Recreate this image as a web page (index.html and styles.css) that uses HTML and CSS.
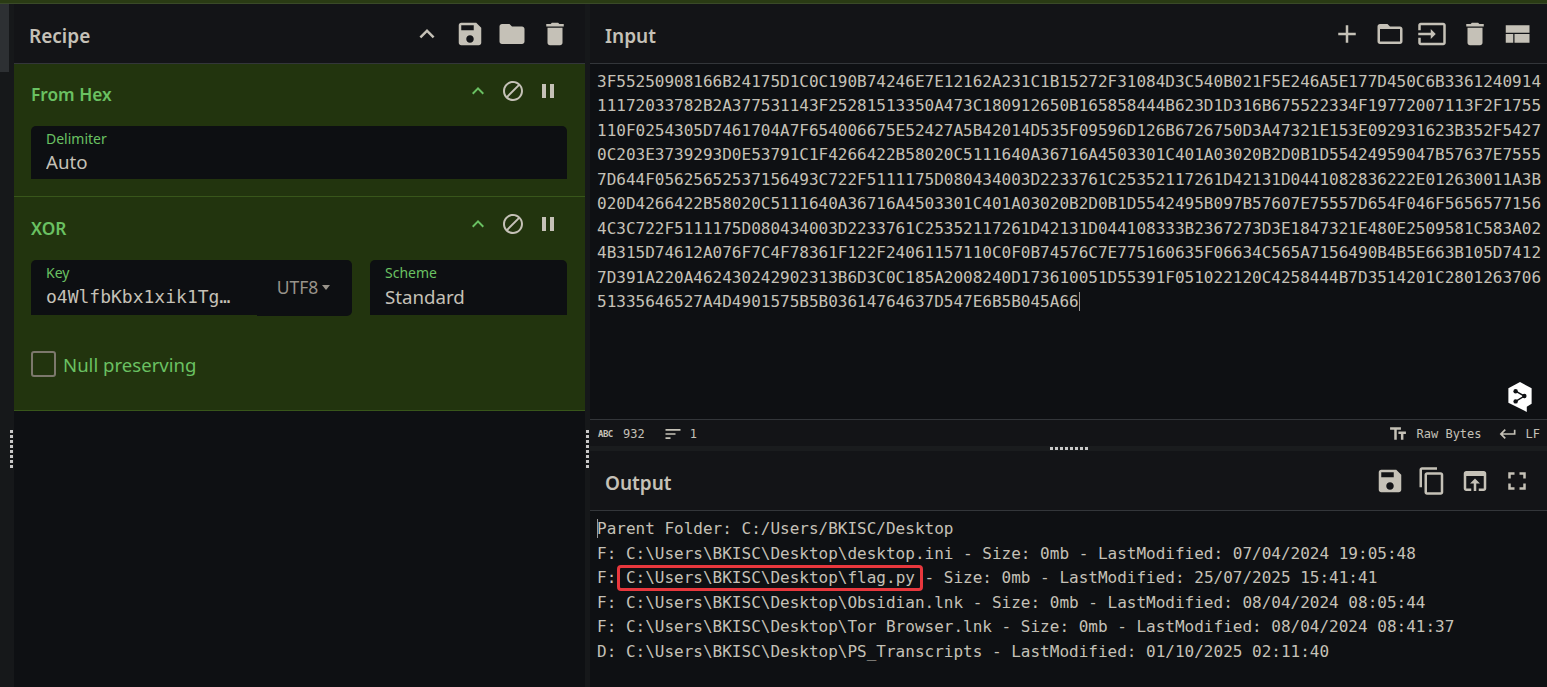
FILE: index.html
```html
<!DOCTYPE html>
<html lang="en">
<head>
    <meta charset="UTF-8">
    <meta name="viewport" content="width=device-width, initial-scale=1.0">
    <title>CyberChef</title>
    <link rel="stylesheet" href="styles.css">
</head>
<body>
    <!-- Icon sprite -->
    <svg class="sprite" xmlns="http://www.w3.org/2000/svg">
        <symbol id="i-up" viewBox="0 0 24 24"><path d="M7.41 15.41L12 10.83l4.59 4.58L18 14l-6-6-6 6z"/></symbol>
        <symbol id="i-save" viewBox="0 0 24 24"><path d="M17 3H5c-1.11 0-2 .9-2 2v14c0 1.1.89 2 2 2h14c1.1 0 2-.9 2-2V7l-4-4zm-5 16c-1.66 0-3-1.34-3-3s1.34-3 3-3 3 1.34 3 3-1.34 3-3 3zm3-10H5V5h10v4z"/></symbol>
        <symbol id="i-folder" viewBox="0 0 24 24"><path d="M10 4H4c-1.1 0-1.99.9-1.99 2L2 18c0 1.1.9 2 2 2h16c1.1 0 2-.9 2-2V8c0-1.1-.9-2-2-2h-8l-2-2z"/></symbol>
        <symbol id="i-delete" viewBox="0 0 24 24"><path d="M6 19c0 1.1.9 2 2 2h8c1.1 0 2-.9 2-2V7H6v12zM19 4h-3.5l-1-1h-5l-1 1H5v2h14V4z"/></symbol>
        <symbol id="i-block" viewBox="0 0 24 24"><path d="M12 2C6.48 2 2 6.48 2 12s4.48 10 10 10 10-4.48 10-10S17.52 2 12 2zM4 12c0-4.42 3.58-8 8-8 1.85 0 3.55.63 4.9 1.69L5.69 16.9C4.63 15.55 4 13.85 4 12zm8 8c-1.85 0-3.55-.63-4.9-1.69L18.31 7.1C19.37 8.45 20 10.15 20 12c0 4.42-3.58 8-8 8z"/></symbol>
        <symbol id="i-pause" viewBox="0 0 24 24"><path d="M6 19h4V5H6v14zm8-14v14h4V5h-4z"/></symbol>
        <symbol id="i-add" viewBox="0 0 24 24"><path d="M19 13h-6v6h-2v-6H5v-2h6V5h2v6h6v2z"/></symbol>
        <symbol id="i-folder-open" viewBox="0 0 24 24"><path d="M20 6h-8l-2-2H4c-1.1 0-1.99.9-1.99 2L2 18c0 1.1.9 2 2 2h16c1.1 0 2-.9 2-2V8c0-1.1-.9-2-2-2zm0 12H4V8h16v10z"/></symbol>
        <symbol id="i-input" viewBox="0 0 24 24"><path d="M21 3.01H3c-1.1 0-2 .9-2 2V9h2V4.99h18v14.03H3V15H1v4.01c0 1.1.9 1.98 2 1.98h18c1.1 0 2-.88 2-1.98v-14c0-1.11-.9-2-2-2zM11 16l4-4-4-4v3H1v2h10v3z"/></symbol>
        <symbol id="i-view" viewBox="0 0 24 24"><path d="M3 19h6v-7H3v7zm7 0h12v-7H10v7zM3 5v6h19V5H3z"/></symbol>
        <symbol id="i-copy" viewBox="0 0 24 24"><path d="M16 1H4c-1.1 0-2 .9-2 2v14h2V3h12V1zm3 4H8c-1.1 0-2 .9-2 2v14c0 1.1.9 2 2 2h11c1.1 0 2-.9 2-2V7c0-1.1-.9-2-2-2zm0 16H8V7h11v14z"/></symbol>
        <symbol id="i-open" viewBox="0 0 24 24"><path d="M19 4H5c-1.11 0-2 .9-2 2v12c0 1.1.89 2 2 2h4v-2H5V8h14v10h-4v2h4c1.1 0 2-.9 2-2V6c0-1.1-.89-2-2-2zm-7 6l-4 4h3v6h2v-6h3l-4-4z"/></symbol>
        <symbol id="i-full" viewBox="0 0 24 24"><path d="M7 14H5v5h5v-2H7v-3zm-2-4h2V7h3V5H5v5zm12 7h-3v2h5v-5h-2v3zM14 5v2h3v3h2V5h-5z"/></symbol>
        <symbol id="i-sort" viewBox="0 0 24 24"><path d="M3 18h6v-2H3v2zM3 6v2h18V6H3zm0 7h12v-2H3v2z"/></symbol>
        <symbol id="i-text" viewBox="0 0 24 24"><path d="M2.5 4v3h5v12h3V7h5V4h-13zm19 5h-9v3h3v7h3v-7h3V9z"/></symbol>
        <symbol id="i-return" viewBox="0 0 24 24"><path d="M19 7v4H5.83l3.58-3.59L8 6l-6 6 6 6 1.41-1.41L5.83 13H21V7z"/></symbol>
    </svg>

    <div class="top-stripe"></div>

    <div class="app">
        <div class="side-strip">
            <div class="thumb"></div>
            <div class="dots-v"></div>
        </div>

        <!-- Recipe -->
        <section class="recipe">
            <div class="title-bar">
                <h2>Recipe</h2>
                <div class="tools recipe-tools">
                    <svg class="icon"><use href="#i-up"/></svg>
                    <svg class="icon"><use href="#i-save"/></svg>
                    <svg class="icon"><use href="#i-folder"/></svg>
                    <svg class="icon"><use href="#i-delete"/></svg>
                </div>
            </div>

            <div class="op op-hex">
                <div class="op-head">
                    <h3>From Hex</h3>
                    <div class="op-tools">
                        <svg class="op-icon up"><use href="#i-up"/></svg>
                        <svg class="op-icon"><use href="#i-block"/></svg>
                        <svg class="op-icon"><use href="#i-pause"/></svg>
                    </div>
                </div>
                <div class="field">
                    <label>Delimiter</label>
                    <div class="value">Auto</div>
                </div>
            </div>

            <div class="op op-xor">
                <div class="op-head">
                    <h3>XOR</h3>
                    <div class="op-tools">
                        <svg class="op-icon up"><use href="#i-up"/></svg>
                        <svg class="op-icon"><use href="#i-block"/></svg>
                        <svg class="op-icon"><use href="#i-pause"/></svg>
                    </div>
                </div>
                <div class="field-row">
                    <div class="field key-field">
                        <label>Key</label>
                        <div class="value mono">o4WlfbKbx1xik1Tg…</div>
                    </div>
                    <div class="encoding">UTF8<span class="caret"></span></div>
                    <div class="field scheme-field">
                        <label>Scheme</label>
                        <div class="value">Standard</div>
                    </div>
                </div>
                <div class="check-row">
                    <span class="checkbox"></span>
                    <span class="check-label">Null preserving</span>
                </div>
            </div>
        </section>

        <div class="gutter-v"><div class="dots-v"></div></div>

        <!-- Input and output -->
        <main class="io">
            <div class="title-bar">
                <h2>Input</h2>
                <div class="tools io-tools">
                    <svg class="icon"><use href="#i-add"/></svg>
                    <svg class="icon"><use href="#i-folder-open"/></svg>
                    <svg class="icon"><use href="#i-input"/></svg>
                    <svg class="icon"><use href="#i-delete"/></svg>
                    <svg class="icon"><use href="#i-view"/></svg>
                </div>
            </div>
            <div class="editor input-editor">
<pre class="code"><span class="hex">3F55250908166B24175D1C0C190B74246E7E12162A231C1B15272F31084D3C540B021F5E246A5E177D450C6B3361240914
11172033782B2A377531143F25281513350A473C180912650B165858444B623D1D316B675522334F19772007113F2F1755
110F0254305D7461704A7F654006675E52427A5B42014D535F09596D126B6726750D3A47321E153E092931623B352F5427
0C203E3739293D0E53791C1F4266422B58020C5111640A36716A4503301C401A03020B2D0B1D55424959047B57637E7555
7D644F05625652537156493C722F5111175D080434003D2233761C25352117261D42131D0441082836222E012630011A3B
020D4266422B58020C5111640A36716A4503301C401A03020B2D0B1D5542495B097B57607E75557D654F046F5656577156
4C3C722F5111175D080434003D2233761C25352117261D42131D044108333B2367273D3E1847321E480E2509581C583A02
4B315D74612A076F7C4F78361F122F24061157110C0F0B74576C7E775160635F06634C565A7156490B4B5E663B105D7412
7D391A220A462430242902313B6D3C0C185A2008240D173610051D55391F051022120C4258444B7D3514201C2801263706
51335646527A4D4901575B5B03614764637D547E6B5B045A66</span><span class="cursor"></span></pre>
                <div class="float-logo">
                    <svg viewBox="0 0 26 32" width="26" height="31">
                        <path class="logo-hex" d="M13 0L25 6.5V22.500L20 25.500V31L12.500 27L1 21.500V6.500z"/>
                        <path class="logo-mark" d="M8.500 9.500L17.500 14.500L8.500 20"/>
                        <circle class="logo-dot" cx="8.500" cy="9.500" r="2.300"/>
                        <circle class="logo-dot" cx="17.500" cy="14.500" r="2.300"/>
                        <circle class="logo-dot" cx="8.500" cy="20" r="2.300"/>
                    </svg>
                </div>
            </div>
            <div class="status-bar">
                <div class="status-left">
                    <span class="abc">ABC</span>
                    <span class="count">932</span>
                    <svg class="status-icon sort"><use href="#i-sort"/></svg>
                    <span>1</span>
                </div>
                <div class="status-right">
                    <svg class="status-icon"><use href="#i-text"/></svg>
                    <span class="raw">Raw Bytes</span>
                    <svg class="status-icon"><use href="#i-return"/></svg>
                    <span>LF</span>
                </div>
            </div>
            <div class="gutter-h"><div class="dots-h"></div></div>
            <div class="title-bar">
                <h2>Output</h2>
                <div class="tools io-tools">
                    <svg class="icon"><use href="#i-save"/></svg>
                    <svg class="icon"><use href="#i-copy"/></svg>
                    <svg class="icon"><use href="#i-open"/></svg>
                    <svg class="icon"><use href="#i-full"/></svg>
                </div>
            </div>
            <div class="editor output-editor">
                <div class="code">
                    <div class="line"><span class="cursor start"></span><span>Parent Folder: C:/Users/BKISC/Desktop</span></div>
                    <div class="line">F: C:\Users\BKISC\Desktop\desktop.ini - Size: 0mb - LastModified: 07/04/2024 19:05:48</div>
                    <div class="line"><span>F: </span><span class="mark">C:\Users\BKISC\Desktop\flag.py</span><span> - Size: 0mb - LastModified: 25/07/2025 15:41:41</span></div>
                    <div class="line">F: C:\Users\BKISC\Desktop\Obsidian.lnk - Size: 0mb - LastModified: 08/04/2024 08:05:44</div>
                    <div class="line">F: C:\Users\BKISC\Desktop\Tor Browser.lnk - Size: 0mb - LastModified: 08/04/2024 08:41:37</div>
                    <div class="line">D: C:\Users\BKISC\Desktop\PS_Transcripts - LastModified: 01/10/2025 02:11:40</div>
                </div>
            </div>
        </main>
    </div>
</body>
</html>
```

FILE: styles.css
```css
* {
    box-sizing: border-box;
}
html, body {
    height: 100%;
}
body {
    margin: 0;
    overflow: hidden;
    background-color: #0e1013;
    color: #c5c1b7;
    font-family: "Noto Sans", Arial, sans-serif;
}
h2, h3 {
    margin: 0;
}
.sprite {
    position: absolute;
    width: 0;
    height: 0;
}
.top-stripe {
    height: 4px;
    background-color: #2a3b14;
    border-bottom: 1px solid #3a4a28;
}
.app {
    display: flex;
    height: 683px;
}

/* Left strip and gutters */
.side-strip {
    width: 14px;
    flex: none;
    background-color: #16181a;
    position: relative;
}
.thumb {
    width: 9px;
    height: 68px;
    background-color: #2d3033;
}
.side-strip .dots-v {
    position: absolute;
    left: 10px;
    top: 426px;
}
.gutter-v {
    width: 5px;
    flex: none;
    background-color: #16181a;
    position: relative;
}
.gutter-v .dots-v {
    position: absolute;
    left: 1px;
    top: 426px;
}
.dots-v {
    width: 3px;
    height: 38px;
    background-image: repeating-linear-gradient(to bottom, #c9c9c9 0, #c9c9c9 3px, transparent 3px, transparent 5px);
}
.dots-h {
    width: 38px;
    height: 3px;
    background-image: repeating-linear-gradient(to right, #c9c9c9 0, #c9c9c9 3px, transparent 3px, transparent 5px);
}

/* Panels */
.recipe {
    width: 571px;
    flex: none;
    background-color: #0e1013;
}
.io {
    flex: 1;
    min-width: 0;
    display: flex;
    flex-direction: column;
}
.title-bar {
    height: 60px;
    flex: none;
    display: flex;
    align-items: center;
    justify-content: space-between;
    padding: 0 15px;
    background-color: #131417;
    border-bottom: 1px solid #33363a;
}
.title-bar h2 {
    font-size: 19px;
    font-weight: 600;
    padding-top: 4px;
    color: #c5c1b7;
}
.tools {
    display: flex;
    align-items: center;
}
.recipe-tools {
    gap: 12.700px;
}
.io-tools {
    gap: 12.500px;
}
.icon {
    width: 30px;
    height: 30px;
    fill: #c5c1b7;
}

/* Operations */
.op {
    background-color: #22340e;
    border-bottom: 1px solid #38561a;
    padding: 0 18px 0 17px;
}
.op-hex {
    height: 133px;
}
.op-xor {
    height: 214px;
}
.op-head {
    height: 62px;
    display: flex;
    align-items: center;
    justify-content: space-between;
}
.op-head h3 {
    font-size: 17.300px;
    font-weight: 600;
    color: #6ac162;
}
.op-hex h3 {
    margin-top: -1px;
}
.op-tools {
    display: flex;
    gap: 11px;
    padding-right: 7px;
    margin-top: -8px;
}
.op-icon {
    width: 24px;
    height: 24px;
    fill: #c5c1b7;
}
.op-icon.up {
    fill: #6ac162;
}
.field {
    background-color: #0d0f12;
    border-radius: 5px 5px 0 0;
    height: 53px;
    padding: 3px 15px 0 15px;
}
.field label {
    display: block;
    font-size: 14px;
    line-height: 20px;
    color: #6ac162;
}
.value {
    font-size: 18.700px;
    line-height: 26px;
    color: #c5c1b7;
    white-space: nowrap;
    overflow: hidden;
}
.value.mono {
    font-family: "DejaVu Sans Mono", monospace;
    font-size: 18px;
}
.field-row {
    display: flex;
    align-items: flex-start;
    margin-top: 1px;
}
.field-row .value {
    margin-top: 1px;
}
.key-field {
    width: 226px;
    height: 55px;
    border-radius: 5px 0 0 0;
}
.encoding {
    width: 95px;
    height: 56px;
    background-color: #0d0f12;
    border-radius: 0 5px 5px 0;
    color: #98938a;
    font-size: 17.500px;
    display: flex;
    align-items: center;
    justify-content: center;
    gap: 4px;
    padding: 0 2px 2px 0;
}
.caret {
    width: 0;
    height: 0;
    border-left: 4.500px solid transparent;
    border-right: 4.500px solid transparent;
    border-top: 5px solid #98938a;
}
.scheme-field {
    width: 197px;
    height: 55px;
    margin-left: 18px;
}
.check-row {
    display: flex;
    align-items: center;
    gap: 7px;
    margin-top: 35px;
}
.checkbox {
    width: 25px;
    height: 26px;
    border: 2px solid #7c786c;
    border-radius: 3px;
}
.check-label {
    font-size: 18.600px;
    color: #6ac162;
}

/* Editors */
.editor {
    position: relative;
    background-color: #0e1013;
    padding: 6px 0 0 7px;
}
.input-editor {
    height: 356px;
    flex: none;
    border-bottom: 1px solid #33363a;
}
.output-editor {
    flex: 1;
}
.code {
    margin: 0;
    font-family: "DejaVu Sans Mono", monospace;
    font-size: 16px;
    line-height: 24.460px;
    color: #c5c1b7;
}
.line {
    line-height: 24.600px;
    white-space: pre;
}
.cursor {
    display: inline-block;
    width: 1px;
    height: 19px;
    margin-bottom: -4px;
    background-color: #9a9a9a;
}
.cursor.start {
    margin-right: -1px;
}

/* Red annotation box drawn over the output text */
.mark {
    position: relative;
}
.mark::after {
    content: "";
    position: absolute;
    left: -9px;
    right: -8px;
    top: -3px;
    bottom: -4px;
    border: 3px solid #e8373d;
    border-radius: 4px;
}
.float-logo {
    position: absolute;
    right: 14px;
    bottom: 6px;
    display: flex;
}
.logo-hex {
    fill: #ffffff;
}
.logo-mark {
    fill: none;
    stroke: #0e1013;
    stroke-width: 1.500;
}
.logo-dot {
    fill: #0e1013;
}

/* Status bar */
.status-bar {
    height: 26px;
    flex: none;
    display: flex;
    align-items: center;
    justify-content: space-between;
    padding: 2px 7px 0 8px;
    background-color: #131417;
    font-family: "DejaVu Sans Mono", monospace;
    font-size: 12px;
    color: #c5c1b7;
}
.status-left, .status-right {
    display: flex;
    align-items: center;
}
.abc {
    width: 17px;
    font-size: 9px;
    font-weight: bold;
    letter-spacing: -0.500px;
}
.count {
    margin-left: 8px;
}
.status-icon {
    width: 20px;
    height: 20px;
    fill: #c5c1b7;
}
.sort {
    margin: 0 7px 0 18px;
}
.raw {
    margin: 0 16px 0 9px;
}
.status-right span:last-child {
    margin-left: 8px;
}
.gutter-h {
    height: 5px;
    flex: none;
    background-color: #1a1c1e;
    display: flex;
    justify-content: center;
    align-items: center;
}
```
